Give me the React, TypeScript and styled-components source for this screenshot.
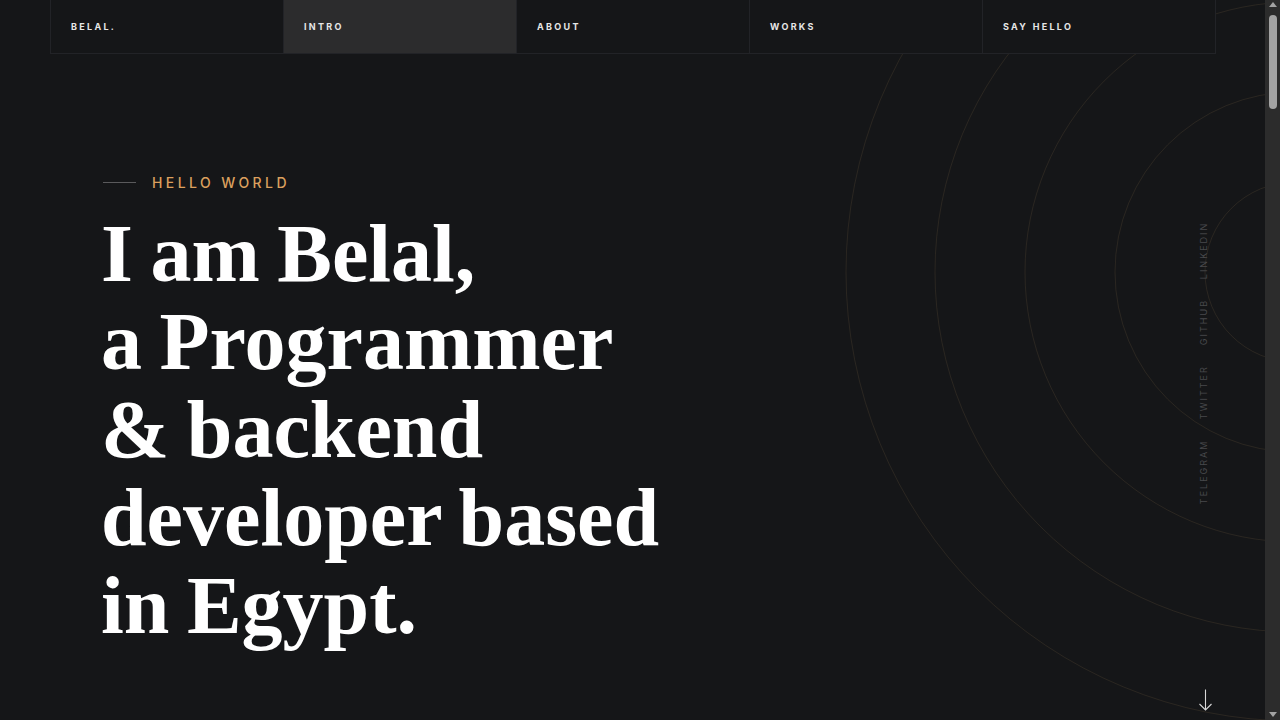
import React from "react";
import styled, { createGlobalStyle } from "styled-components";

const GlobalStyle = createGlobalStyle`
  :root { color-scheme: dark; }
  html, body { margin: 0; padding: 0; overflow: hidden; }
  body {
    background: #151618;
    color: #f5f5f5;
    font-family: Inter, "Noto Sans", sans-serif;
  }
  * { box-sizing: border-box; }
`;

const Shell = styled.div`
  display: flex;
  width: 100%;
  height: 100vh;
  overflow: hidden;
`;

const Main = styled.main`
  flex: 1;
  min-width: 0;
`;

const Hero = styled.section`
  position: relative;
  height: 720px;
  overflow: hidden;
`;

const Rings = styled.svg`
  position: absolute;
  left: 845px;
  top: -178px;
  width: 900px;
  height: 900px;
  z-index: 0;
  pointer-events: none;
`;

const Nav = styled.nav`
  position: relative;
  z-index: 2;
  width: 1166px;
  margin: 0 0 0 50px;
  display: grid;
  grid-template-columns: repeat(5, 1fr);
  background: #151618;
  border-left: 1px solid #222327;
  border-bottom: 1px solid #222327;
`;

const NavItem = styled.a<{ $active?: boolean }>`
  display: flex;
  align-items: center;
  height: 53px;
  padding-left: 20px;
  border-right: 1px solid #222327;
  background: ${(p) => (p.$active ? "#2c2c2d" : "transparent")};
  color: #e6e6e6;
  font-family: Inter, "Noto Sans", sans-serif;
  font-weight: 700;
  font-size: 9px;
  letter-spacing: 2.3px;
  text-transform: uppercase;
  text-decoration: none;
`;

const HeroBody = styled.div`
  position: relative;
  z-index: 1;
  width: 1165px;
  margin: 0 auto;
  padding: 118px 51px 0;
`;

const Eyebrow = styled.div`
  display: flex;
  align-items: center;
  gap: 16px;
  height: 20px;
`;

const EyebrowLine = styled.span`
  display: block;
  width: 33px;
  height: 1px;
  margin-left: 2px;
  background: #5a5a5c;
`;

const EyebrowText = styled.span`
  color: #dca05e;
  font-family: Inter, "Noto Sans", sans-serif;
  font-size: 14px;
  font-weight: 500;
  letter-spacing: 3.4px;
  text-transform: uppercase;
`;

const Title = styled.h1`
  margin: 18px 0 0;
  color: #ffffff;
  font-family: "Liberation Serif", "DejaVu Serif", serif;
  font-weight: 700;
  font-size: 82px;
  line-height: 88px;
  letter-spacing: 0;
  word-spacing: -3px;
`;

const Social = styled.ul`
  position: absolute;
  z-index: 1;
  right: 51px;
  top: 222px;
  margin: 0;
  padding: 0;
  list-style: none;
  display: flex;
  gap: 20px;
  writing-mode: vertical-rl;
  transform: rotate(180deg);
`;

const SocialLink = styled.a`
  color: #48494c;
  font-family: Inter, "Noto Sans", sans-serif;
  font-size: 9px;
  line-height: 12px;
  letter-spacing: 2px;
  text-transform: uppercase;
  text-decoration: none;
`;

const ScrollDown = styled.a`
  position: absolute;
  z-index: 1;
  left: 1198px;
  top: 689px;
  display: block;
  width: 15px;
  height: 23px;
`;

const ScrollRail = styled.div`
  flex: 0 0 15px;
  height: 100%;
  display: flex;
  flex-direction: column;
  align-items: center;
  background: #2c2c2c;
`;

const RailButton = styled.div<{ $down?: boolean }>`
  display: flex;
  align-items: center;
  justify-content: center;
  width: 15px;
  height: 15px;
  margin-top: ${(p) => (p.$down ? "auto" : "0")};

  &::before {
    content: "";
    width: 0;
    height: 0;
    border-left: 4px solid transparent;
    border-right: 4px solid transparent;
    ${(p) =>
      p.$down
        ? "border-top: 5px solid #a3a3a3; margin-top: 4px;"
        : "border-bottom: 5px solid #a3a3a3; margin-top: -6px;"}
  }
`;

const RailThumb = styled.div`
  width: 8px;
  height: 94px;
  border-radius: 4px;
  background: #a3a3a3;
`;

const navItems = ["Belal.", "Intro", "About", "Works", "Say Hello"];
const socials = ["Telegram", "Twitter", "Github", "LinkedIn"];
const radii = [90, 180, 270, 360, 449];

export default function App() {
  return (
    <Shell>
      <GlobalStyle />
      <Main>
        <Hero>
          <Rings viewBox="0 0 900 900" aria-hidden="true">
            {radii.map((r) => (
              <circle
                key={r}
                cx="450"
                cy="450"
                r={r}
                fill="none"
                stroke="rgba(200,160,100,0.12)"
                strokeWidth="1"
              />
            ))}
          </Rings>
          <Nav>
            {navItems.map((n) => (
              <NavItem key={n} href="#" $active={n === "Intro"}>
                {n}
              </NavItem>
            ))}
          </Nav>
          <HeroBody>
            <Eyebrow>
              <EyebrowLine />
              <EyebrowText>Hello World</EyebrowText>
            </Eyebrow>
            <Title>
              I am Belal,
              <br />a Programmer
              <br />& backend
              <br />
              developer based
              <br />
              in Egypt.
            </Title>
          </HeroBody>
          <Social>
            {socials.map((s) => (
              <li key={s}>
                <SocialLink href="#">{s}</SocialLink>
              </li>
            ))}
          </Social>
          <ScrollDown href="#about" aria-label="Scroll down">
            <svg width="15" height="23" viewBox="0 0 15 23">
              <line x1="7.5" y1="0.5" x2="7.5" y2="21" stroke="#d8d8d8" strokeWidth="1.1" />
              <polyline points="1.5,15 7.5,21 13.5,15" fill="none" stroke="#d8d8d8" strokeWidth="1.1" />
            </svg>
          </ScrollDown>
        </Hero>
      </Main>
      <ScrollRail aria-hidden="true">
        <RailButton />
        <RailThumb />
        <RailButton $down />
      </ScrollRail>
    </Shell>
  );
}
